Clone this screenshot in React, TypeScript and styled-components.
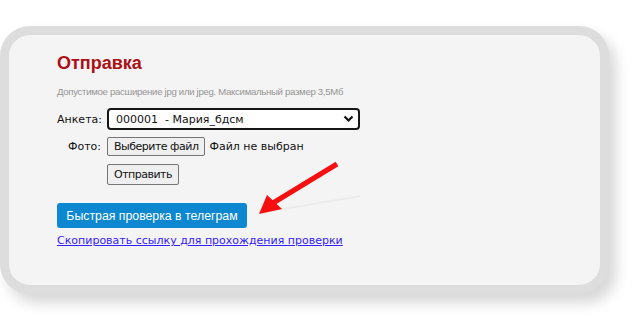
import React from "react";
import styled, { createGlobalStyle } from "styled-components";

const Global = createGlobalStyle`
  html, body { margin: 0; padding: 0; background: #ffffff; }
  body { width: 635px; height: 319px; overflow: hidden; }
`;

const Page = styled.div`
  padding-top: 26px;
`;

const Card = styled.div`
  position: relative;
  box-sizing: border-box;
  width: 609px;
  height: 268px;
  border: 9px solid #dddddd;
  border-radius: 30px;
  background: #f4f4f4;
  box-shadow: 7px 9px 14px rgba(0, 0, 0, 0.16);
  padding: 18px 48px 0;
  display: flex;
  flex-direction: column;
  align-items: flex-start;
`;

const Title = styled.h2`
  margin: 0;
  font-family: "Liberation Sans", Arial, sans-serif;
  font-weight: bold;
  font-size: 18px;
  line-height: 21px;
  color: #ad0f14;
`;

const Hint = styled.div`
  margin-top: 12px;
  font-family: "Liberation Sans", Arial, sans-serif;
  font-size: 9.6px;
  letter-spacing: -0.3px;
  line-height: 12px;
  color: #949494;
`;

const Form = styled.div`
  margin-top: 10px;
  display: grid;
  grid-template-columns: 44px auto;
  column-gap: 6px;
  row-gap: 7px;
  align-items: center;
  font-family: "DejaVu Sans", Verdana, sans-serif;
  font-size: 11px;
  color: #111;
`;

const Label = styled.span`
  text-align: right;
  white-space: nowrap;
`;

const SelectWrap = styled.div`
  position: relative;
  width: 253px;
`;

const Select = styled.select`
  appearance: none;
  box-sizing: border-box;
  width: 100%;
  height: 22px;
  border: 2px solid #161616;
  border-radius: 4px;
  background: #ffffff;
  padding: 0 0 0 7px;
  font-family: "DejaVu Sans", Verdana, sans-serif;
  font-size: 11px;
  color: #111;
  outline: none;
`;

const Chevron = styled.svg`
  position: absolute;
  right: 6px;
  top: 7px;
  pointer-events: none;
`;

const FileRow = styled.div`
  display: flex;
  align-items: center;
  gap: 4px;
`;

const NativeButton = styled.button<{ $h: number }>`
  box-sizing: border-box;
  height: ${(p) => p.$h}px;
  padding: 0 6px;
  border: 1px solid #767676;
  border-radius: 2px;
  background: #efefef;
  font-family: "DejaVu Sans", Verdana, sans-serif;
  font-size: 11px;
  letter-spacing: -0.5px;
  color: #111;
  white-space: nowrap;
`;

const SubmitRow = styled.div`
  grid-column: 2;
  margin-top: 1px;
`;

const BlueButton = styled.button`
  margin-top: 18px;
  box-sizing: border-box;
  width: 190px;
  height: 25px;
  border: none;
  border-radius: 3px;
  background: #0d87cf;
  color: #ffffff;
  font-family: "Liberation Sans", Arial, sans-serif;
  font-size: 12.3px;
  padding: 0;
`;

const CopyLink = styled.a`
  margin-top: 6px;
  font-family: "DejaVu Sans", Verdana, sans-serif;
  font-size: 11px;
  line-height: 14px;
  color: #3322ff;
  text-decoration: underline;
  cursor: pointer;
`;

const Arrow = styled.svg`
  position: absolute;
  left: -9px;
  top: -9px;
  pointer-events: none;
`;

export default function App() {
  return (
    <>
      <Global />
      <Page>
        <Card>
          <Title>Отправка</Title>
          <Hint>Допустимое расширение jpg или jpeg. Максимальный размер 3,5Мб</Hint>
          <Form>
            <Label>Анкета:</Label>
            <SelectWrap>
              <Select defaultValue="1">
                <option value="1">000001&nbsp; - Мария_бдсм</option>
              </Select>
              <Chevron width="11" height="8" viewBox="0 0 11 8">
                <path d="M1.5 1.5 L5.5 5.5 L9.5 1.5" fill="none" stroke="#111" strokeWidth="2.2" />
              </Chevron>
            </SelectWrap>
            <Label>Фото:</Label>
            <FileRow>
              <NativeButton $h={19}>Выберите файл</NativeButton>
              <span>Файл не выбран</span>
            </FileRow>
            <SubmitRow>
              <NativeButton $h={21}>Отправить</NativeButton>
            </SubmitRow>
          </Form>
          <BlueButton>Быстрая проверка в телеграм</BlueButton>
          <CopyLink>Скопировать ссылку для прохождения проверки</CopyLink>
          <Arrow width="609" height="268" viewBox="0 26 609 268">
            <line x1="266" y1="212" x2="360" y2="196" stroke="rgba(0,0,0,0.03)" strokeWidth="2" />
            <line x1="337" y1="164" x2="273" y2="203" stroke="#f50f0f" strokeWidth="5" />
            <polygon points="259,214 267,195 282,209" fill="#f50f0f" />
          </Arrow>
        </Card>
      </Page>
    </>
  );
}
